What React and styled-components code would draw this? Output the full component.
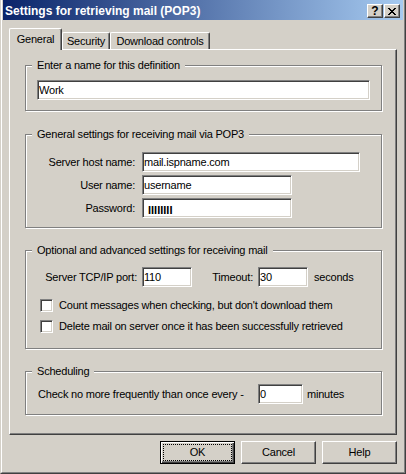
import styled, { createGlobalStyle } from "styled-components";

const GlobalStyle = createGlobalStyle`
  * { box-sizing: border-box; }
  html, body { margin: 0; padding: 0; background: #d4d0c8; }
  body {
    font-family: "Liberation Sans", Arial, sans-serif;
    font-size: 11px;
    letter-spacing: -0.2px;
    color: #000;
  }
`;

// close glyph of the caption button, one row of pixels per entry
const closeGlyph = [
  [[0, 2], [6, 2]],
  [[1, 2], [5, 2]],
  [[2, 4]],
  [[3, 2]],
  [[2, 4]],
  [[1, 2], [5, 2]],
  [[0, 2], [6, 2]],
];

function CloseIcon() {
  return (
    <svg width="8" height="7" viewBox="0 0 8 7" shapeRendering="crispEdges">
      {closeGlyph.map((row, y) =>
        row.map(([x, w]) => (
          <rect key={`${y}-${x}`} x={x} y={y} width={w} height={1} fill="#000" />
        ))
      )}
    </svg>
  );
}

export default function App() {
  return (
    <>
      <GlobalStyle />
      <Styled.Window>
        <Styled.Frame>
          <Styled.TitleBar>
            <Styled.Title>Settings for retrieving mail (POP3)</Styled.Title>
            <Styled.CaptionButtons>
              <Styled.CaptionButton>?</Styled.CaptionButton>
              <Styled.CaptionButton>
                <CloseIcon />
              </Styled.CaptionButton>
            </Styled.CaptionButtons>
          </Styled.TitleBar>

          <Styled.Body>
            <Styled.TabStrip>
              <Styled.Tab $active $w={53}>General</Styled.Tab>
              <Styled.Tab $w={48}>Security</Styled.Tab>
              <Styled.Tab $w={100}>Download controls</Styled.Tab>
            </Styled.TabStrip>

            <Styled.Panel>
              <Styled.Group>
                <Styled.Legend>Enter a name for this definition</Styled.Legend>
                <Styled.GroupBody $pad="8px 0 10px 11px">
                  <Styled.Edit $w={333} defaultValue="Work" readOnly />
                </Styled.GroupBody>
              </Styled.Group>

              <Styled.Group $mt={17}>
                <Styled.Legend>General settings for receiving mail via POP3</Styled.Legend>
                <Styled.GroupBody $pad="11px 0 9px 0" $gap={3}>
                  <Styled.Row>
                    <Styled.Label $w={109} $mr={7}>Server host name:</Styled.Label>
                    <Styled.Edit $w={218} defaultValue="mail.ispname.com" readOnly />
                  </Styled.Row>
                  <Styled.Row>
                    <Styled.Label $w={109} $mr={7}>User name:</Styled.Label>
                    <Styled.Edit $w={150} defaultValue="username" readOnly />
                  </Styled.Row>
                  <Styled.Row>
                    <Styled.Label $w={109} $mr={7}>Password:</Styled.Label>
                    <Styled.Edit $w={150} $mask defaultValue="IIIIIIII" readOnly />
                  </Styled.Row>
                </Styled.GroupBody>
              </Styled.Group>

              <Styled.Group $mt={16}>
                <Styled.Legend>Optional and advanced settings for receiving mail</Styled.Legend>
                <Styled.GroupBody $pad="10px 0 15px 0">
                  <Styled.Row>
                    <Styled.Label $w={111} $mr={5}>Server TCP/IP port:</Styled.Label>
                    <Styled.Edit $w={50} defaultValue="110" readOnly />
                    <Styled.Label $w={61} $mr={5}>Timeout:</Styled.Label>
                    <Styled.Edit $w={50} defaultValue="30" readOnly />
                    <Styled.Suffix $ml={6}>seconds</Styled.Suffix>
                  </Styled.Row>
                  <Styled.CheckList>
                    <Styled.CheckRow>
                      <Styled.Check />
                      Count messages when checking, but don't download them
                    </Styled.CheckRow>
                    <Styled.CheckRow>
                      <Styled.Check />
                      Delete mail on server once it has been successfully retrieved
                    </Styled.CheckRow>
                  </Styled.CheckList>
                </Styled.GroupBody>
              </Styled.Group>

              <Styled.Group $mt={16}>
                <Styled.Legend>Scheduling</Styled.Legend>
                <Styled.GroupBody $pad="6px 0 10px 12px">
                  <Styled.Row>
                    <Styled.Label $w={220} $left>
                      Check no more frequently than once every -
                    </Styled.Label>
                    <Styled.Edit $w={45} defaultValue="0" readOnly />
                    <Styled.Suffix $ml={4}>minutes</Styled.Suffix>
                  </Styled.Row>
                </Styled.GroupBody>
              </Styled.Group>
            </Styled.Panel>

            <Styled.ButtonRow>
              <Styled.Button $default>
                <Styled.FocusRect>OK</Styled.FocusRect>
              </Styled.Button>
              <Styled.Button>Cancel</Styled.Button>
              <Styled.Button>Help</Styled.Button>
            </Styled.ButtonRow>
          </Styled.Body>
        </Styled.Frame>
      </Styled.Window>
    </>
  );
}

const sunken = `
  border: 1px solid;
  border-color: #808080 #fff #fff #808080;
  box-shadow: inset 1px 1px 0 #404040, inset -1px -1px 0 #d4d0c8;
  background: #fff;
`;

const Styled = {
  Window: styled.div`
    width: 406px;
    height: 474px;
    display: flex;
    flex-direction: column;
    background: #d4d0c8;
    border-left: 1px solid #d4d0c8;
    border-right: 1px solid #404040;
    border-bottom: 1px solid #404040;
  `,

  Frame: styled.div`
    flex: 1;
    display: flex;
    flex-direction: column;
    padding: 0 1px 1px 1px;
    border-left: 1px solid #fff;
    border-right: 1px solid #808080;
    border-bottom: 1px solid #808080;
  `,

  TitleBar: styled.div`
    height: 20px;
    display: flex;
    justify-content: space-between;
    align-items: flex-start;
    padding: 0 3px 0 2px;
    background: linear-gradient(to right, #0a246a, #a6caf0);
  `,

  Title: styled.div`
    margin-top: 4px;
    font-size: 12px;
    line-height: 14px;
    font-weight: bold;
    letter-spacing: 0;
    color: #fff;
    white-space: nowrap;
  `,

  CaptionButtons: styled.div`
    display: flex;
    gap: 1px;
    margin-top: 4px;
  `,

  CaptionButton: styled.div`
    width: 16px;
    height: 14px;
    display: flex;
    align-items: center;
    justify-content: center;
    background: #d4d0c8;
    border: 1px solid;
    border-color: #fff #404040 #404040 #fff;
    box-shadow: inset -1px -1px 0 #808080;
    font-size: 12px;
    font-weight: bold;
    line-height: 12px;
    letter-spacing: 0;
  `,

  Body: styled.div`
    flex: 1;
    display: flex;
    flex-direction: column;
    padding: 8px 6px 0 6px;
  `,

  TabStrip: styled.div`
    height: 21px;
    display: flex;
    align-items: flex-end;
  `,

  Tab: styled.div`
    position: relative;
    z-index: ${(p) => (p.$active ? 1 : 0)};
    width: ${(p) => p.$w}px;
    height: ${(p) => (p.$active ? 22 : 17)}px;
    margin-bottom: ${(p) => (p.$active ? -1 : 0)}px;
    padding-top: ${(p) => (p.$active ? 4 : 2)}px;
    background: #d4d0c8;
    border-top: 1px solid #fff;
    border-left: 1px solid #fff;
    border-right: 1px solid #404040;
    border-radius: 2px 2px 0 0;
    box-shadow: inset -1px 0 0 #808080;
    line-height: 13px;
    text-align: center;
    white-space: nowrap;
  `,

  Panel: styled.div`
    width: 388px;
    height: 386px;
    display: flex;
    flex-direction: column;
    padding: 9px 0 0 15px;
    border-top: 1px solid #fff;
    border-left: 1px solid #fff;
    border-right: 1px solid #404040;
    border-bottom: 1px solid #404040;
    box-shadow: inset -1px -1px 0 #808080;
  `,

  Group: styled.fieldset`
    width: 357px;
    min-width: 0;
    margin: ${(p) => p.$mt || 0}px 0 0 0;
    padding: 0;
    border: 1px solid #808080;
    box-shadow: 1px 1px 0 #fff, inset 1px 1px 0 #fff;
  `,

  Legend: styled.legend`
    margin-left: 6px;
    padding: 0 5px;
    line-height: 13px;
    background: #d4d0c8;
  `,

  GroupBody: styled.div`
    display: flex;
    flex-direction: column;
    gap: ${(p) => p.$gap || 0}px;
    padding: ${(p) => p.$pad};
  `,

  Row: styled.div`
    height: 20px;
    display: flex;
    align-items: center;
  `,

  Label: styled.span`
    width: ${(p) => p.$w}px;
    margin-right: ${(p) => p.$mr || 0}px;
    text-align: ${(p) => (p.$left ? "left" : "right")};
    line-height: 13px;
    white-space: nowrap;
  `,

  Suffix: styled.span`
    margin-left: ${(p) => p.$ml}px;
    line-height: 13px;
  `,

  Edit: styled.input`
    ${sunken}
    width: ${(p) => p.$w}px;
    height: 20px;
    margin: 0;
    padding: ${(p) => (p.$mask ? "4px 0 0 5px" : "0 1px")};
    border-radius: 0;
    outline: none;
    font-family: inherit;
    font-size: 11px;
    font-weight: ${(p) => (p.$mask ? "bold" : "normal")};
    letter-spacing: ${(p) => (p.$mask ? "0" : "-0.2px")};
    color: #000;
  `,

  CheckList: styled.div`
    display: flex;
    flex-direction: column;
    gap: 8px;
    margin-top: 12px;
    padding-left: 14px;
  `,

  CheckRow: styled.label`
    height: 13px;
    display: flex;
    align-items: center;
    gap: 6px;
    line-height: 13px;
    white-space: nowrap;
  `,

  Check: styled.span`
    ${sunken}
    width: 13px;
    height: 13px;
    flex: none;
  `,

  ButtonRow: styled.div`
    display: flex;
    justify-content: flex-end;
    gap: 6px;
    margin-top: 6px;
  `,

  Button: styled.button`
    width: 75px;
    height: 23px;
    display: flex;
    align-items: stretch;
    justify-content: center;
    margin: 0;
    padding: ${(p) => (p.$default ? "2px" : "0")};
    background: #d4d0c8;
    border: 1px solid;
    border-color: ${(p) => (p.$default ? "#000" : "#fff #404040 #404040 #fff")};
    border-radius: 0;
    box-shadow: ${(p) =>
      p.$default
        ? "inset 1px 1px 0 #fff, inset -1px -1px 0 #404040, inset -2px -2px 0 #808080"
        : "inset -1px -1px 0 #808080"};
    font-family: inherit;
    font-size: 11px;
    letter-spacing: -0.2px;
    line-height: 21px;
    color: #000;
  `,

  FocusRect: styled.span`
    flex: 1;
    display: flex;
    align-items: center;
    justify-content: center;
    border: 1px dotted #000;
    line-height: 13px;
  `,
};
